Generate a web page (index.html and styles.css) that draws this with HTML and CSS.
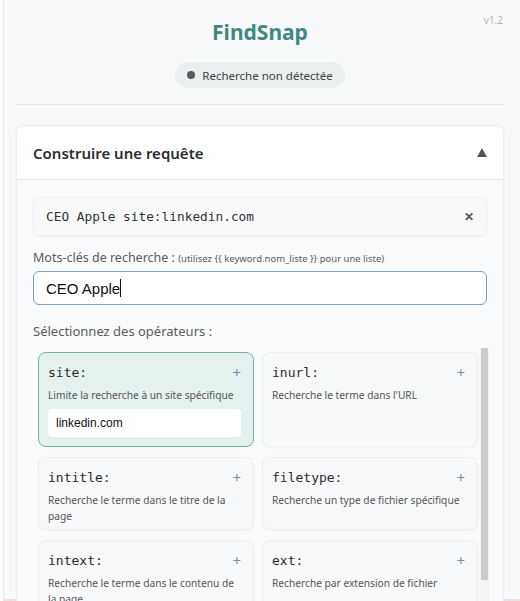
FILE: index.html
```html
<!DOCTYPE html>
<html lang="fr">
<head>
<meta charset="utf-8">
<title>FindSnap</title>
<link rel="stylesheet" href="styles.css">
</head>
<body>
<div class="app">
  <header class="header">
    <span class="version">v1.2</span>
    <h1 class="logo">FindSnap</h1>
    <div class="status"><span class="status-dot"></span>Recherche non détectée</div>
  </header>
  <hr class="divider">
  <section class="card">
    <div class="card-head">
      <h2 class="card-title">Construire une requête</h2>
      <span class="toggle"></span>
    </div>
    <div class="card-body">
      <div class="preview">
        <span class="preview-text">CEO Apple site:linkedin.com</span>
        <span class="clear">&#x2715;</span>
      </div>
      <label class="label">Mots-clés de recherche : <span class="hint">(utilisez {{ keyword.nom_liste }} pour une liste)</span></label>
      <div class="kw-input">CEO Apple<span class="caret"></span></div>
      <div class="label ops-label">Sélectionnez des opérateurs :</div>
      <div class="ops-wrap">
        <div class="ops">
          <div class="op op-active">
            <div class="op-head"><span class="op-name">site:</span><span class="plus">+</span></div>
            <div class="op-desc">Limite la recherche à un site spécifique</div>
            <div class="op-input">linkedin.com</div>
          </div>
          <div class="op">
            <div class="op-head"><span class="op-name">inurl:</span><span class="plus">+</span></div>
            <div class="op-desc">Recherche le terme dans l'URL</div>
          </div>
          <div class="op">
            <div class="op-head"><span class="op-name">intitle:</span><span class="plus">+</span></div>
            <div class="op-desc">Recherche le terme dans le titre de la page</div>
          </div>
          <div class="op">
            <div class="op-head"><span class="op-name">filetype:</span><span class="plus">+</span></div>
            <div class="op-desc">Recherche un type de fichier spécifique</div>
          </div>
          <div class="op">
            <div class="op-head"><span class="op-name">intext:</span><span class="plus">+</span></div>
            <div class="op-desc">Recherche le terme dans le contenu de la page</div>
          </div>
          <div class="op">
            <div class="op-head"><span class="op-name">ext:</span><span class="plus">+</span></div>
            <div class="op-desc">Recherche par extension de fichier</div>
          </div>
        </div>
        <div class="scrollbar"><div class="thumb"></div></div>
      </div>
    </div>
  </section>
</div>
</body>
</html>
```
FILE: styles.css
```css
html, body {
  margin: 0;
  padding: 0;
  height: 601px;
  overflow: hidden;
}
body {
  background: #f8f9fa;
  font-family: "Noto Sans", "Open Sans", sans-serif;
  color: #333;
  box-shadow: inset 3px 0 0 #fbfbfb, inset 4px 0 0 #e6e7e8, inset 0 -2px 0 #f3dede;
}
.app {
  padding: 0 16px;
}
.header {
  position: relative;
  display: flex;
  flex-direction: column;
  align-items: center;
  padding-top: 17px;
}
.version {
  position: absolute;
  top: 13px;
  right: 1px;
  font-size: 10px;
  color: #b5b5b5;
}
.logo {
  margin: 0;
  font-size: 21px;
  line-height: 30px;
  font-weight: 700;
  color: #3f8a80;
}
.status {
  margin-top: 15px;
  display: flex;
  align-items: center;
  gap: 7px;
  height: 26px;
  padding: 0 12px;
  border-radius: 13px;
  background: #e8efee;
  font-size: 11.5px;
  color: #444;
}
.status-dot {
  width: 8px;
  height: 8px;
  border-radius: 50%;
  background: #555b5e;
}
.divider {
  margin: 16px 0 20px;
  border: 0;
  border-top: 1px solid #e5e7e9;
}
.card {
  background: #fafbfc;
  border: 1px solid #eceef0;
  border-radius: 8px;
  box-shadow: 0 1px 3px rgba(0,0,0,0.05);
  overflow: hidden;
}
.card-head {
  display: flex;
  justify-content: space-between;
  align-items: center;
  height: 53px;
  padding: 0 16px 0 16px;
  background: #fff;
  border-bottom: 1px solid #e8eaec;
}
.card-title {
  margin: 0;
  font-size: 15px;
  font-weight: 600;
  color: #2d2d2d;
}
.toggle {
  width: 0;
  height: 0;
  border-left: 5.5px solid transparent;
  border-right: 5.5px solid transparent;
  border-bottom: 9px solid #555;
}
.card-body {
  padding: 17px 16px 0;
}
.preview {
  display: flex;
  justify-content: space-between;
  align-items: center;
  height: 37px;
  padding: 0 12px;
  background: #f9fafb;
  border: 1px solid #eff1f3;
  border-radius: 6px;
  box-shadow: 0 1px 2px rgba(0,0,0,0.04);
}
.preview-text {
  font-family: "DejaVu Sans Mono", monospace;
  font-size: 12.8px;
  color: #333;
}
.clear {
  font-size: 12px;
  font-weight: 700;
  color: #555;
}
.label {
  display: block;
  margin-top: 13px;
  font-size: 12.5px;
  color: #5a5a5a;
  line-height: 18px;
}
.hint {
  font-size: 9.5px;
}
.kw-input {
  margin-top: 3px;
  height: 32px;
  display: flex;
  align-items: center;
  padding: 0 12px;
  background: #fff;
  border: 1px solid #7d9fc7;
  border-radius: 6px;
  font-family: "Liberation Sans", Arial, sans-serif;
  font-size: 15px;
  color: #111;
}
.caret {
  display: inline-block;
  width: 1px;
  height: 18px;
  background: #111;
}
.ops-label {
  margin-top: 17px;
  font-size: 13px;
}
.ops-wrap {
  margin: 8px -2px 0 1px;
  height: 300px;
  display: flex;
  overflow: hidden;
}
.ops {
  flex: 1;
  padding: 4px 2px 4px 4px;
  display: grid;
  grid-template-columns: 1fr 1fr;
  gap: 10px 8px;
  align-content: start;
}
.scrollbar {
  width: 9px;
  background: #f3f4f5;
  display: flex;
  justify-content: center;
}
.thumb {
  width: 7px;
  height: 232px;
  background: #cacbcc;
}
.op {
  min-height: 73px;
  box-sizing: border-box;
  padding: 10px 12px 5px 9px;
  background: #f8f9fa;
  border: 1px solid #eceef0;
  border-radius: 8px;
  box-shadow: 0 1px 2px rgba(0,0,0,0.03);
}
.op-active {
  background: #e5f1ee;
  border-color: #75b3a5;
  min-height: 95px;
}
.op-head {
  display: flex;
  justify-content: space-between;
  align-items: center;
  height: 18px;
}
.op-name {
  font-family: "DejaVu Sans Mono", monospace;
  font-size: 13px;
  color: #2a2a2a;
}
.plus {
  font-size: 15px;
  color: #6f8fb5;
  line-height: 1;
}
.op-desc {
  margin-top: 6px;
  font-size: 10.2px;
  line-height: 16px;
  color: #555;
}
.op-input {
  margin-top: 6px;
  height: 28px;
  display: flex;
  align-items: center;
  padding: 0 8px;
  background: #fff;
  border-radius: 4px;
  font-family: "Liberation Sans", Arial, sans-serif;
  font-size: 12px;
  color: #111;
}
```
